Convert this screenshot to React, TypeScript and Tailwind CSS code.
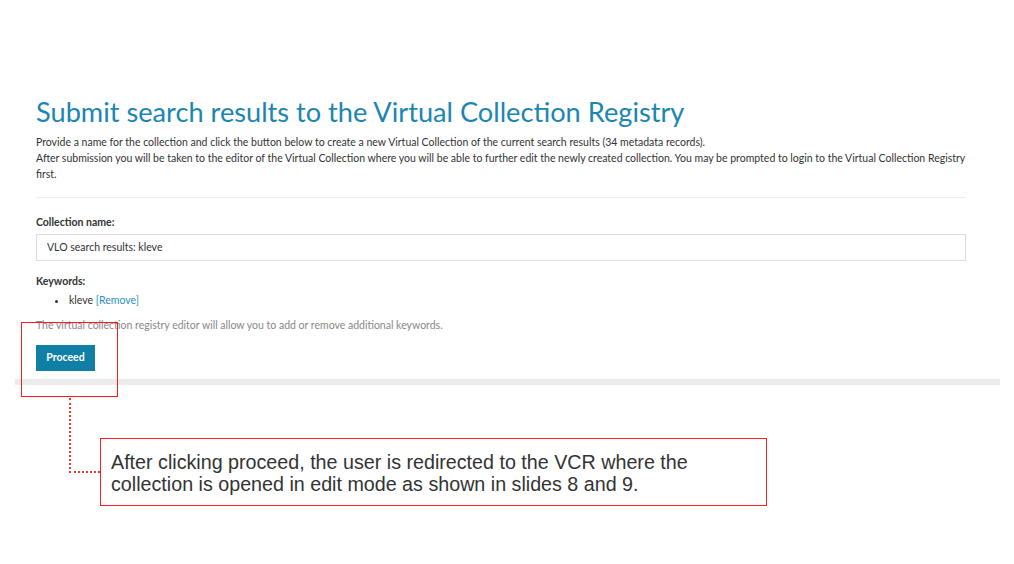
import React from "react";

const sans = "font-['Lato','Noto_Sans',sans-serif]";

export default function App() {
  return (
    <main className="relative h-[564px] w-[1014px] overflow-hidden bg-white">
      <section className={`ml-[15px] w-[985px] ${sans} text-[#333]`}>
        <div className="pl-[21px] pr-[34px] pt-[93px]">
          <h1 className="h-[37px] text-[27.2px] leading-[37px] font-normal text-[#1b86b3]">
            Submit search results to the Virtual Collection Registry
          </h1>
          <div className="mt-[4px] text-[10.5px] leading-[16px]">
            <p>
              Provide a name for the collection and click the button below to create a new Virtual Collection of the
              current search results (34 metadata records).
            </p>
            <p>
              After submission you will be taken to the editor of the Virtual Collection where you will be able to
              further edit the newly created collection. You may be prompted to login to the Virtual Collection
              Registry first.
            </p>
          </div>
          <hr className="mt-[15px] border-t border-[#eeeeee]" />

          <div className="mt-[16px] text-[10.5px] leading-[16px] font-bold">Collection name:</div>
          <div className="mt-[4px] flex h-[27px] items-center border border-[#dddddd] px-[10px] text-[10.5px]">
            VLO search results: kleve
          </div>

          <div className="mt-[12px] text-[10.5px] leading-[16px] font-bold">Keywords:</div>
          <ul className="mt-[3px] list-disc pl-[32px] text-[10.5px] leading-[16px]">
            <li className="pl-[1px]">
              kleve <span className="text-[#2b8fc0]">[Remove]</span>
            </li>
          </ul>
          <p className="mt-[9px] text-[10.5px] leading-[16px] text-[#888]">
            The virtual collection registry editor will allow you to add or remove additional keywords.
          </p>

          <button
            type="button"
            className="mt-[12px] flex h-[26px] w-[59px] items-center justify-center bg-[#0f7fa6] text-[10.5px] font-bold text-white"
          >
            Proceed
          </button>
        </div>
        <div className="mt-[8px] h-[6px] bg-[#ebebeb]" />
      </section>

      <div className="ml-[100px] mt-[53px] h-[68px] w-[667px] border border-[#ff2020] pl-[10px] pt-[12px] font-['Liberation_Sans',Arial,sans-serif] text-[19.7px] leading-[22px] text-[#333]">
        <p>After clicking proceed, the user is redirected to the VCR where the</p>
        <p>collection is opened in edit mode as shown in slides 8 and 9.</p>
      </div>

      {/* highlight around the button + dotted connector */}
      <div className="absolute left-[21px] top-[322px] h-[75px] w-[97px] border border-[#ff1a1a]" />
      <div className="absolute left-[69px] top-[398px] h-[75px] w-[31px] border-b-2 border-l-2 border-dotted border-[#e33]" />
    </main>
  );
}
